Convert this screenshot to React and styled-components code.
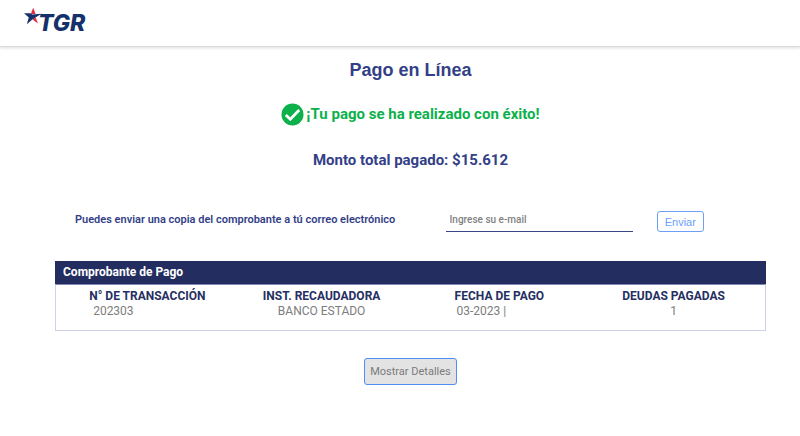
import React from "react";
import styled, { createGlobalStyle } from "styled-components";

const GlobalStyle = createGlobalStyle`
  *, *::before, *::after { box-sizing: border-box; }
  body {
    margin: 0;
    background: #fff;
    color: #333f87;
    font-family: Roboto, "Liberation Sans", sans-serif;
  }
`;

const Header = styled.header`
  display: flex;
  height: 47px;
  padding: 6px 24px;
  border-bottom: 1px solid #dcdcdc;
  box-shadow: 0 1px 3px rgba(0, 0, 0, 0.14);
`;

const LogoLink = styled.a`
  display: block;
  height: 32px;
  text-decoration: none;
`;

const LogoText = styled.text`
  font-family: Inter, sans-serif;
  font-size: 23px;
  font-weight: 800;
  font-style: italic;
  fill: #14316b;
`;

const Main = styled.main`
  display: flex;
  flex-direction: column;
  align-items: center;
  padding: 11px 34px 32px 55px;
`;

const Title = styled.h1`
  margin: 0;
  font: bold 18px/24px "Liberation Sans", Arial, sans-serif;
`;

const Success = styled.p`
  display: flex;
  align-items: center;
  gap: 2px;
  margin: 20px 0 0;
  color: #0cb14b;
  font-size: 15px;
  font-weight: 700;
  line-height: 24px;
`;

const Amount = styled.p`
  margin: 22px 0 0;
  font-size: 15px;
  font-weight: 700;
  line-height: 24px;
`;

const MailForm = styled.form`
  display: grid;
  grid-template-columns: 370fr 187fr 133fr;
  align-self: stretch;
  align-items: center;
  margin-top: 35px;
  padding-left: 20px;
`;

const MailLabel = styled.label`
  font-size: 11px;
  font-weight: 600;
  line-height: 16px;
`;

const MailInput = styled.input`
  width: 100%;
  height: 24px;
  padding: 0 4px;
  border: 0;
  border-bottom: 1px solid #3a478a;
  border-radius: 0;
  background: transparent;
  color: #333f87;
  font: 500 10px/16px Roboto, sans-serif;
  &::placeholder { color: #828282; opacity: 1; }
`;

const SendButton = styled.button`
  justify-self: start;
  width: 47px;
  height: 21px;
  margin: 4px 0 0 24px;
  padding: 0;
  border: 1px solid #6c9ff7;
  border-radius: 3px;
  background: #fff;
  color: #6c9ff7;
  font: 11px/16px "Liberation Sans", Arial, sans-serif;
`;

const Receipt = styled.table`
  width: 100%;
  margin-top: 29px;
  table-layout: fixed;
  border-collapse: separate;
  border-spacing: 0;
`;

const ReceiptCaption = styled.caption`
  height: 23px;
  padding: 0 8px;
  background: #242d60;
  color: #fff;
  font-size: 12px;
  font-weight: 700;
  line-height: 23px;
  text-align: left;
`;

const ReceiptHead = styled.th`
  padding: 4px 0 0;
  border-top: 1px solid #8087b5;
  color: #262f62;
  font-size: 12px;
  font-weight: 700;
  line-height: 14px;
  &:first-child { border-left: 1px solid #cdd1ec; padding-left: 6px; }
  &:last-child { border-right: 1px solid #cdd1ec; padding-right: 6px; }
`;

const ReceiptValue = styled.td`
  padding: 1px 0 11px;
  border-bottom: 1px solid #cdd1ec;
  color: #7d7d7d;
  font-size: 12px;
  line-height: 15px;
  text-align: center;
  &:first-child { border-left: 1px solid #cdd1ec; padding-left: 6px; }
  &:last-child { border-right: 1px solid #cdd1ec; padding-right: 6px; }
`;

const HiddenDigits = styled.span`
  display: inline-block;
  width: ${(p) => p.$width}px;
`;

const DetailsButton = styled.button`
  height: 27px;
  margin: 27px 0 0;
  padding: 0 5px;
  border: 1px solid #4f8df7;
  border-radius: 3px;
  background: #e3e3e3;
  color: #7b7b7b;
  font: 11px/16px Roboto, sans-serif;
`;

const columns = [
  { label: "N° DE TRANSACCIÓN", value: "202303", hidden: 68 },
  { label: "INST. RECAUDADORA", value: "BANCO ESTADO", hidden: 0 },
  { label: "FECHA DE PAGO", value: "03-2023 |", hidden: 36 },
  { label: "DEUDAS PAGADAS", value: "1", hidden: 0 },
];

function Logo() {
  return (
    <svg width="72" height="32" viewBox="0 0 72 32" role="img" aria-label="TGR">
      <path d="M9.2 1.8 L11.6 8 L6.8 8 Z" fill="#e42d42" />
      <path d="M8.6 13.4 L11.6 11.2 L14 17.6 Z" fill="#e42d42" />
      <path d="M0 7.2 L6.4 7.2 L8.2 8.6 L17.6 7.8 L11.4 11.4 L8 13.8 L2.8 18.2 L4.8 11.4 Z" fill="#14316b" />
      <LogoText x="14" y="25">TGR</LogoText>
    </svg>
  );
}

function CheckIcon() {
  return (
    <svg width="23" height="23" viewBox="0 0 23 23" aria-hidden="true">
      <circle cx="11.5" cy="11.5" r="11" fill="#0cb14b" />
      <path d="M4.8 12 L9.3 16.3 L18.2 7" fill="none" stroke="#fff" strokeWidth="2.7" />
    </svg>
  );
}

export default function App() {
  return (
    <>
      <GlobalStyle />
      <Header>
        <LogoLink href="#"><Logo /></LogoLink>
      </Header>
      <Main>
        <Title>Pago en Línea</Title>
        <Success><CheckIcon />¡Tu pago se ha realizado con éxito!</Success>
        <Amount>Monto total pagado: $15.612</Amount>
        <MailForm onSubmit={(e) => e.preventDefault()}>
          <MailLabel htmlFor="email">Puedes enviar una copia del comprobante a tú correo electrónico</MailLabel>
          <MailInput id="email" type="email" placeholder="Ingrese su e-mail" />
          <SendButton type="submit">Enviar</SendButton>
        </MailForm>
        <Receipt>
          <ReceiptCaption>Comprobante de Pago</ReceiptCaption>
          <thead>
            <tr>{columns.map((c) => <ReceiptHead key={c.label} scope="col">{c.label}</ReceiptHead>)}</tr>
          </thead>
          <tbody>
            <tr>
              {columns.map((c) => (
                <ReceiptValue key={c.label}>
                  {c.value}
                  {c.hidden > 0 && <HiddenDigits $width={c.hidden} />}
                </ReceiptValue>
              ))}
            </tr>
          </tbody>
        </Receipt>
        <DetailsButton type="button">Mostrar Detalles</DetailsButton>
      </Main>
    </>
  );
}
